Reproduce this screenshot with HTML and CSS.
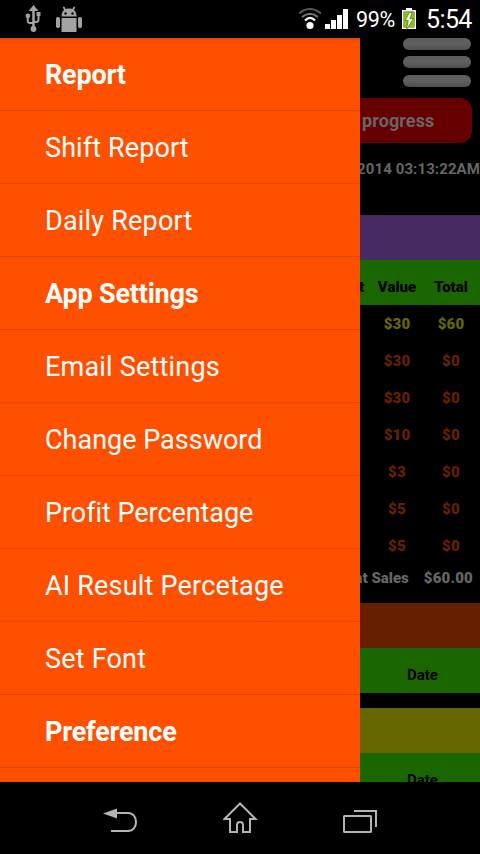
FILE: index.html
```html
<!DOCTYPE html>
<html lang="en">
<head>
<meta charset="utf-8">
<title>Report</title>
<link rel="stylesheet" href="styles.css">
</head>
<body>
<div class="screen">
  <header class="status">
    <svg class="usb" width="16" height="28" viewBox="0 0 16 28" fill="none" stroke="#a3a3a3" stroke-width="2">
      <path stroke-width="2.600" d="M8.500 5v19"/><path d="M2.700 11v4.500q0 2.500 2.500 2.500h3.300M13.500 9v5.500q0 2.500-2.500 2.500H8.500"/>
      <g fill="#a3a3a3" stroke="none"><path d="M8.500 0l5 6H3.500z"/><circle cx="8.500" cy="24" r="2.900"/><circle cx="2.900" cy="10.800" r="2.300"/><path d="M11.500 7h4v4h-4z"/></g>
    </svg>
    <svg class="droid" width="26" height="27" viewBox="0 0 26 27" fill="#a3a3a3">
      <path d="M5.500 10.500C5.500 5 8.500 2.500 13 2.500s7.500 2.500 7.500 8z"/><path d="M9.500 4.500L7.800 1.500M16.500 4.500l1.700-3" stroke="#a3a3a3" stroke-width="1.800" stroke-linecap="round"/>
      <path d="M5.500 12h15v14h-15z"/><rect x="0" y="11" width="4" height="11" rx="1.700"/><rect x="22" y="11" width="4" height="11" rx="1.700"/>
      <circle cx="9.500" cy="7.500" r="1.200" fill="#000"/><circle cx="16.500" cy="7.500" r="1.200" fill="#000"/>
    </svg>
    <svg class="wifi" width="24" height="22" viewBox="0 0 24 22" fill="none" stroke-width="2">
      <path d="M1 5.500Q12-3.500 23 5.500" stroke="#555"/><path d="M4 9q8-6.500 16 0" stroke="#777"/><path d="M7 12.500q5-5 10 0" stroke="#fff" stroke-width="2.200"/><circle cx="12" cy="17.500" r="3.600" fill="#fff"/>
    </svg>
    <svg class="signal" width="23" height="20" viewBox="0 0 23 20" fill="#fff"><path d="M0 15h5v5H0zM6 11h5v9H6zM12 6h5v14h-5zM18 0h5v20h-5z"/></svg>
    <span class="percent">99%</span>
    <svg class="battery" width="14" height="22" viewBox="0 0 14 22"><path d="M0 2h4V0h6v2h4v19H0z" fill="#fff"/><path d="M1.500 3.500h11v16h-11z" fill="#355400"/><path d="M2 4h10v15H2z" fill="#80c800"/><path d="M7.500 4.500L3 12.500h3.300L4.500 21.500l7-11H8l2.200-6z" fill="#fff" stroke="#466b09" stroke-width=".7"/></svg>
    <span class="clock">5:54</span>
  </header>
  <main class="main">
    <nav class="drawer">
      <div class="item head">Report</div>
      <div class="item near">Shift Report</div>
      <div class="item wide">Daily Report</div>
      <div class="item head">App Settings</div>
      <div class="item wide">Email Settings</div>
      <div class="item">Change Password</div>
      <div class="item snug">Profit Percentage</div>
      <div class="item wide">AI Result Percetage</div>
      <div class="item wide">Set Font</div>
      <div class="item head">Preference</div>
      <div class="item"></div>
    </nav>
    <section class="content">
      <div class="burger"><i></i><i></i><i></i></div>
      <div class="progress">progress</div>
      <div class="stamp">2014 03:13:22AM</div>
      <div class="band purple"></div>
      <div class="band green cols"><b class="cut">t</b><b>Value</b><b>Total</b></div>
      <div class="row yellow"><b>$30</b><b>$60</b></div>
      <div class="row"><b>$30</b><b>$0</b></div>
      <div class="row"><b>$30</b><b>$0</b></div>
      <div class="row"><b>$10</b><b>$0</b></div>
      <div class="row"><b>$3</b><b>$0</b></div>
      <div class="row"><b>$5</b><b>$0</b></div>
      <div class="row"><b>$5</b><b>$0</b></div>
      <div class="sales"><b>nt Sales</b><b class="sum">$60.00</b></div>
      <div class="band brown"></div>
      <div class="band green date">Date</div>
      <div class="band olive"></div>
      <div class="band green date">Date</div>
    </section>
  </main>
  <footer class="navbar">
    <svg width="36" height="28" viewBox="0 0 36 28" fill="none" stroke="#b5b5b5" stroke-width="2"><path d="M13 8h12c5 0 8 4 8 9s-3 9-8 9H8"/><path d="M0 8.500l14-5v10z" fill="#b5b5b5" stroke="none"/></svg>
    <svg width="36" height="33" viewBox="0 0 36 33" fill="none" stroke="#b5b5b5" stroke-width="2"><path d="M17 1.500L1.500 17H7v13h7v-7q0-3 3-3t3 3v7h7V17h5.500z"/></svg>
    <svg width="36" height="26" viewBox="0 0 36 26" fill="none" stroke="#b5b5b5" stroke-width="2"><rect x="2" y="7" width="27" height="16" rx=".5"/><path d="M12 2h22v16"/></svg>
  </footer>
</div>
</body>
</html>
```
FILE: styles.css
```css
* { box-sizing: border-box; }
body { margin: 0; background: #000; font-family: Roboto, "Noto Sans", sans-serif; }
.screen { width: 480px; height: 854px; display: flex; flex-direction: column; overflow: hidden; background: #000; }
.status { height: 38px; display: flex; align-items: flex-start; color: #fff; }
.status svg { flex: none; }
.usb { margin: 5px 0 0 25px; }
.droid { margin: 6px 0 0 15px; }
.wifi { margin: 8px 0 0 216px; }
.signal { margin: 9px 0 0 3px; }
.percent { width: 40px; margin-left: 8px; font-size: 21.5px; line-height: 40px; white-space: nowrap; letter-spacing: -.3px; }
.battery { margin: 8px 0 0 6px; }
.clock { margin-left: 10px; font-size: 25px; line-height: 40px; letter-spacing: -.6px; }
.main { height: 744px; display: flex; overflow: hidden; }
.drawer { width: 360px; flex: none; background: linear-gradient(#e04600, #fb4e00 3px, #ff5000 8px); }
.item { height: 73px; padding-left: 45px; border-bottom: 1px solid #e04600; color: #fff; font-size: 27px; line-height: 75px; white-space: nowrap; }
.wide { letter-spacing: .2px; }
.near { letter-spacing: .1px; }
.snug { letter-spacing: -.05px; }
.head { font-weight: 700; letter-spacing: -.2px; }
.content { width: 120px; overflow: hidden; color: #666; font-size: 15px; font-weight: 700; }
.burger { height: 60px; display: flex; flex-direction: column; align-items: flex-end; gap: 7px; padding-right: 9px; }
.burger i { width: 68px; height: 12px; border-radius: 6px; background: linear-gradient(#5c5c5c, #606060 45%, #505050); }
.burger i:nth-child(2) { margin-top: -1px; }
.progress { height: 45px; width: 112px; border-radius: 0 12px 12px 0; background: #600; padding-left: 2px; font-size: 18px; line-height: 46px; letter-spacing: .1px; }
.stamp { height: 72px; display: flex; justify-content: flex-end; line-height: 52px; white-space: nowrap; letter-spacing: .1px; }
.band { height: 45px; }
.purple { background: #472a61; }
.green { background: #1a6600; color: #000; line-height: 54px; }
.cols, .row { display: flex; }
.cols b, .row b { width: 54px; flex: none; text-align: center; }
.cols .cut { width: 10px; text-align: left; text-indent: -1px; }
.row { height: 37px; padding-left: 10px; color: #662000; line-height: 38px; letter-spacing: .2px; }
.yellow { color: #666600; }
.sales { height: 39px; display: flex; justify-content: flex-end; gap: 15px; padding-right: 7px; line-height: 28px; white-space: nowrap; }
.sum { letter-spacing: .2px; }
.brown { background: #662000; }
.date { padding-left: 5px; text-align: center; }
.olive { margin-top: 15px; background: #666600; }
.navbar { height: 72px; display: flex; padding: 20px 102px 0 103px; justify-content: space-between; }
.navbar svg:first-child { margin-top: 3px; }
.navbar svg:last-child { margin-top: 7px; }
```
